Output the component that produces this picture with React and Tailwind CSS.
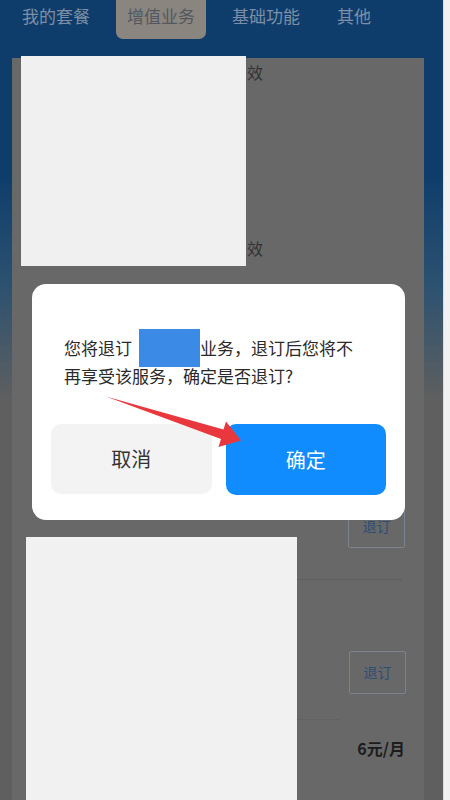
import React from 'react';

const tabs = ['我的套餐', '增值业务', '基础功能', '其他'];

// arrow pointing from the message text down to the confirm button
function RedArrow() {
    return (
        <svg className="absolute inset-0 pointer-events-none" width="450" height="800" viewBox="0 0 450 800">
            <polygon
                points="106,396.5 223.5,429.5 226,421.5 241,440.5 218.5,447 221,439"
                fill="#e8383d"
            />
        </svg>
    );
}

function UnsubscribeButton() {
    return (
        <div className="w-[57px] h-[43px] border border-[#7b838c] rounded-[2px] flex items-center justify-center text-[14px] text-[#2e4d74]">
            退订
        </div>
    );
}

export default function App() {
    return (
        <div className="relative w-[450px] h-[800px] overflow-hidden flex font-['Noto_Sans_CJK_SC',sans-serif]">
            <div className="flex-1 flex flex-col bg-[linear-gradient(to_bottom,#0f3d6b_22%,#2d5270_36%,#5f5f5f_50%)]">
                {/* tab strip */}
                <div className="h-[58px] flex items-start pl-[11px] gap-[15px]">
                    {tabs.map((tab, i) => (
                        <div
                            key={tab}
                            className={`px-[11px] h-[39px] pt-[5px] text-[17px] leading-[22px] ${i === 1
                                ? 'bg-[#8a857f] rounded-b-[7px] text-[#53585f]'
                                : 'text-[#7d8fa6]'
                                }`}
                        >
                            {tab}
                        </div>
                    ))}
                </div>

                {/* service list */}
                <div className="flex-1 mx-[12px] w-[412px] bg-[#686868] flex">
                    <div className="w-[285px] flex flex-col">
                        <div className="flex h-[210px] -mt-[2px]">
                            <div className="ml-[9px] w-[225px] h-full bg-[#f0f0f0]"></div>
                            <div className="ml-[1px] flex flex-col justify-between pt-[7px] pb-[9px] text-[16px] leading-[18px] text-[#333333]">
                                <span>效</span>
                                <span>效</span>
                            </div>
                        </div>
                        <div className="ml-[14px] mt-[271px] w-[271px] flex-1 bg-[#f1f1f1]"></div>
                    </div>
                    <div className="flex-1 flex flex-col">
                        <div className="self-end mr-[19px] mt-[447px]">
                            <UnsubscribeButton />
                        </div>
                        <div className="mt-[31px] w-[105px] h-px bg-[#5e5e5e]"></div>
                        <div className="self-end mr-[18px] mt-[71px]">
                            <UnsubscribeButton />
                        </div>
                        <div className="mt-[25px] w-[43px] h-px bg-[#626262]"></div>
                        <div className="self-end mr-[19px] mt-[16px] text-[16px] leading-[24px] font-bold text-[#1c1c1c]">
                            6元/月
                        </div>
                    </div>
                </div>
            </div>
            <div className="w-[7px] bg-[#f1f1f1] border-l border-[#d8dde2]"></div>

            {/* confirm dialog */}
            <div className="absolute left-[32px] top-[284px] w-[373px] h-[236px] bg-white rounded-[14px] flex flex-col">
                <div className="pt-[50px] px-[32px] text-[17px] leading-[28px] text-[#2a2a2a]">
                    <div className="flex items-center h-[28px]">
                        <span>您将退订“</span>
                        <span className="w-[61px] h-[38px] bg-[#3b8ae6] shrink-0 -ml-[10px]"></span>
                        <span>业务，退订后您将不</span>
                    </div>
                    <div>再享受该服务，确定是否退订?</div>
                </div>
                <div className="mt-[34px] px-[19px] flex gap-[14px]">
                    <button className="w-[161px] h-[70px] rounded-[10px] bg-[#f3f3f3] text-[20px] text-[#333333]">
                        取消
                    </button>
                    <button className="w-[161px] h-[71px] rounded-[10px] bg-[#118cff] text-[20px] text-white">
                        确定
                    </button>
                </div>
            </div>

            <RedArrow />
        </div>
    );
}
